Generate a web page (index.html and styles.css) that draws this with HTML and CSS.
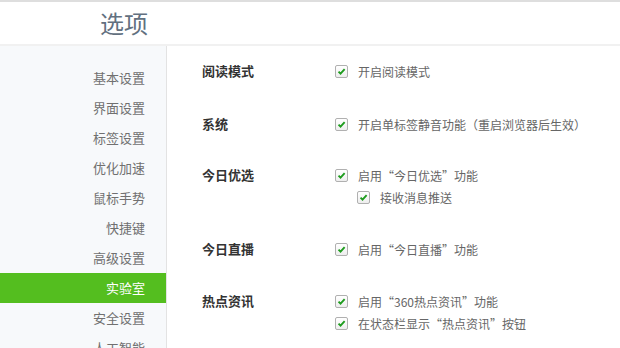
FILE: index.html
```html
<!DOCTYPE html>
<html lang="zh-CN">
<head>
    <meta charset="UTF-8">
    <title>选项</title>
    <link rel="stylesheet" href="styles.css">
</head>
<body>
    <header class="top">
        <h1>选项</h1>
    </header>

    <div class="main">
        <nav class="sidebar">
            <a class="nav-item">基本设置</a>
            <a class="nav-item">界面设置</a>
            <a class="nav-item">标签设置</a>
            <a class="nav-item">优化加速</a>
            <a class="nav-item">鼠标手势</a>
            <a class="nav-item">快捷键</a>
            <a class="nav-item">高级设置</a>
            <a class="nav-item active">实验室</a>
            <a class="nav-item">安全设置</a>
            <a class="nav-item">人工智能</a>
        </nav>

        <div class="content">
            <div class="section">
                <div class="label">阅读模式</div>
                <div class="options">
                    <label class="check"><span class="box"><svg viewBox="0 0 13 13"><path d="M3 6.6l2.4 2.5L10.2 3.8"/></svg></span>开启阅读模式</label>
                </div>
            </div>

            <div class="section system">
                <div class="label">系统</div>
                <div class="options">
                    <label class="check"><span class="box"><svg viewBox="0 0 13 13"><path d="M3 6.6l2.4 2.5L10.2 3.8"/></svg></span>开启单标签静音功能（重启浏览器后生效）</label>
                </div>
            </div>

            <div class="section">
                <div class="label">今日优选</div>
                <div class="options">
                    <label class="check"><span class="box"><svg viewBox="0 0 13 13"><path d="M3 6.6l2.4 2.5L10.2 3.8"/></svg></span>启用“今日优选”功能</label>
                    <label class="check sub"><span class="box"><svg viewBox="0 0 13 13"><path d="M3 6.6l2.4 2.5L10.2 3.8"/></svg></span>接收消息推送</label>
                </div>
            </div>

            <div class="section">
                <div class="label">今日直播</div>
                <div class="options">
                    <label class="check"><span class="box"><svg viewBox="0 0 13 13"><path d="M3 6.6l2.4 2.5L10.2 3.8"/></svg></span>启用“今日直播”功能</label>
                </div>
            </div>

            <div class="section">
                <div class="label">热点资讯</div>
                <div class="options">
                    <label class="check"><span class="box"><svg viewBox="0 0 13 13"><path d="M3 6.6l2.4 2.5L10.2 3.8"/></svg></span>启用“360热点资讯”功能</label>
                    <label class="check"><span class="box"><svg viewBox="0 0 13 13"><path d="M3 6.6l2.4 2.5L10.2 3.8"/></svg></span>在状态栏显示“热点资讯”按钮</label>
                </div>
            </div>
        </div>
    </div>
</body>
</html>
```

FILE: styles.css
```css
html, body {
    height: 100%;
}

body {
    margin: 0;
    background-color: #fff;
    font-family: "Noto Sans CJK SC", "Noto Sans", sans-serif;
    display: flex;
    flex-direction: column;
    overflow: hidden;
}

.top {
    flex-shrink: 0;
    height: 46px;
    box-sizing: border-box;
    border-top: 2px solid #dedede;
    border-bottom: 2px solid #f1f1f1;
    padding-left: 100px;
    display: flex;
    align-items: center;
}

.top h1 {
    margin: 0 0 1px;
    font-size: 24px;
    font-weight: 400;
    color: #627080;
    line-height: 1;
}

.main {
    flex: 1;
    display: flex;
    min-height: 0;
}

.sidebar {
    flex-shrink: 0;
    width: 166px;
    background-color: #f7f9fb;
    border-right: 1px solid #e3e3e3;
    padding-top: 17px;
    display: flex;
    flex-direction: column;
}

.nav-item {
    flex-shrink: 0;
    height: 30px;
    line-height: 30px;
    text-align: right;
    padding-right: 21px;
    font-size: 13px;
    color: #707070;
}

.nav-item.active {
    background-color: #54be1f;
    color: #fff;
}

.content {
    flex: 1;
    padding: 14px 0 0 35px;
    display: flex;
    flex-direction: column;
    gap: 30px;
}

.section {
    display: flex;
}

.section.system {
    margin-top: 1px;
    margin-bottom: -1px;
}

.label {
    width: 133px;
    font-size: 13px;
    font-weight: 700;
    color: #333;
    line-height: 22px;
}

.options {
    display: flex;
    flex-direction: column;
}

.check {
    display: flex;
    align-items: center;
    height: 22px;
    font-size: 12px;
    color: #666;
}

.check.sub {
    padding-left: 22px;
}

.box {
    width: 11px;
    height: 11px;
    border: 1px solid #b0b0b0;
    border-radius: 2px;
    background: linear-gradient(#fff, #eee);
    margin-right: 10px;
    display: flex;
}

.box svg {
    width: 11px;
    height: 11px;
    fill: none;
    stroke: #1e9c1e;
    stroke-width: 2.2;
}
```
